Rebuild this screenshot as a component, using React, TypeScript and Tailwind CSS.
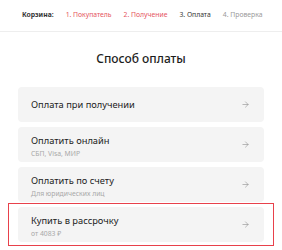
import { ArrowRight } from "lucide-react";
import clsx from "clsx";

const STEPS = [
  { label: "1. Покупатель", state: "done" },
  { label: "2. Получение", state: "done" },
  { label: "3. Оплата", state: "current" },
  { label: "4. Проверка", state: "todo" },
];

const METHODS = [
  { title: "Оплата при получении" },
  { title: "Оплатить онлайн", note: "СБП, Visa, МИР" },
  { title: "Оплатить по счету", note: "Для юридических лиц" },
  { title: "Купить в рассрочку", note: "от 4083 ₽", selected: true },
];

function MethodCard({ title, note }: { title: string; note?: string }) {
  return (
    <div className="h-[35px] rounded-[4px] bg-[#f4f4f4] flex items-center justify-between pl-[13px] pr-[14px]">
      <div className={clsx("flex flex-col gap-[2.5px]", note && "pt-[4px]")}>
        <span className="text-[9.3px] leading-[12px] text-[#222]">{title}</span>
        {note && <span className="text-[6.8px] leading-[9px] text-[#a8a8a8]">{note}</span>}
      </div>
      <ArrowRight size={9} strokeWidth={1.5} className="text-[#888]" />
    </div>
  );
}

export default function App() {
  return (
    <div className="w-[282px] h-[250px] bg-white overflow-hidden" style={{ fontFamily: '"Noto Sans", sans-serif' }}>
      {/* Checkout steps */}
      <div className="h-[32px] border-b border-[#eeeeee] flex items-center gap-[12px] pl-[22px] text-[6.8px] whitespace-nowrap">
        <span className="font-bold text-[#333]">Корзина:</span>
        {STEPS.map((s) => (
          <span
            key={s.label}
            className={clsx(
              s.state === "done" && "text-[#e5545e]",
              s.state === "current" && "text-[#333]",
              s.state === "todo" && "text-[#9a9a9a]"
            )}
          >
            {s.label}
          </span>
        ))}
      </div>

      <h2 className="text-center text-[12px] font-medium text-[#1d1d1d] mt-[18px] leading-[18px]">Способ оплаты</h2>

      <div className="mt-[19px] px-[18px] flex flex-col gap-[5px]">
        {METHODS.map((m) =>
          m.selected ? (
            <div key={m.title} className="-mx-[10px] -my-[4px] border border-[#e8414b] px-[9px] py-[3px]">
              <MethodCard title={m.title} note={m.note} />
            </div>
          ) : (
            <MethodCard key={m.title} title={m.title} note={m.note} />
          )
        )}
      </div>
    </div>
  );
}
